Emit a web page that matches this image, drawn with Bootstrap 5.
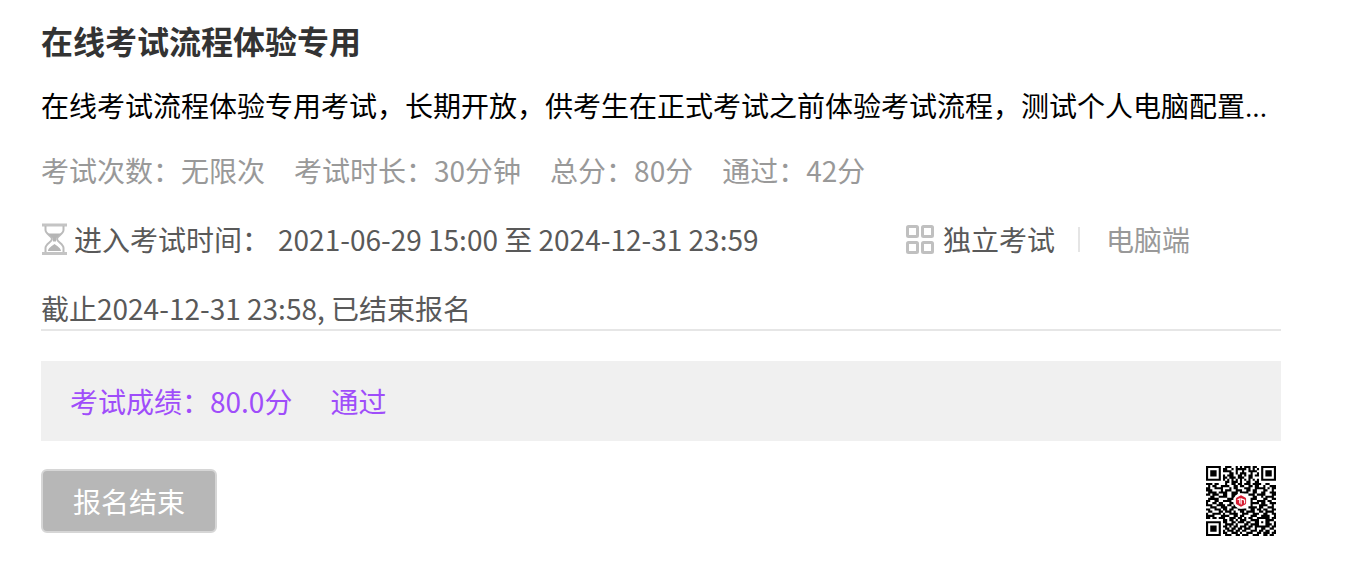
<!DOCTYPE html>
<html lang="zh-CN">
<head>
<meta charset="utf-8">
<meta name="viewport" content="width=device-width, initial-scale=1">
<title>在线考试流程体验专用</title>
<link href="https://cdn.jsdelivr.net/npm/bootstrap@5.3.0/dist/css/bootstrap.min.css" rel="stylesheet">
<style>
  body { font-family: "Noto Sans CJK SC", sans-serif; font-size: 28px; line-height: 40px; color: #595959; background: #fff; }
  .exam { padding: 20px 73px 48px 41px; }
  .exam-title { font-size: 32px; line-height: 40px; font-weight: 700; color: #333; margin-bottom: 25px; }
  .exam-desc { color: #000; margin-bottom: 25px; }
  .exam-dots { font-family: "Open Sans", sans-serif; line-height: 1; }
  .exam-facts { color: #999; column-gap: 29px; margin-bottom: 29px; }
  .exam-when { margin-bottom: 29px; }
  .exam-tags { width: 376px; }
  .exam-tags svg { margin-right: 8px; }
  .exam-time svg { margin-right: 6px; }
  .exam-range { margin-left: 8px; }
  .tag-rule { width: 2px; height: 25px; background: #e5e5e5; margin: 0 26px 0 23px; }
  .tag-device { color: #999; }
  .exam-deadline { border-bottom: 2px solid #e6e6e6; padding-bottom: 1px; margin-bottom: 30px; }
  .exam-score { background: #f0f0f0; color: #9f4dfa; padding: 20px 29px; column-gap: 38px; margin-bottom: 25px; }
  .btn-closed, .btn-closed:disabled { font-size: 28px; line-height: 40px; color: #fff; background: #b7b7b7; border: 2px solid #d6d6d6; border-radius: 6px; padding: 10px 30px; opacity: 1; margin-top: 3px; }
  .exam-qr { margin-right: 5px; }
</style>
</head>
<body>
<main class="exam">
  <h1 class="exam-title">在线考试流程体验专用</h1>
  <p class="exam-desc">在线考试流程体验专用考试，长期开放，供考生在正式考试之前体验考试流程，测试个人电脑配置<span class="exam-dots">...</span></p>
  <div class="exam-facts d-flex flex-wrap">
    <span>考试次数：无限次</span><span>考试时长：30分钟</span><span>总分：80分</span><span>通过：42分</span>
  </div>
  <div class="exam-when d-flex flex-wrap justify-content-between">
    <div class="exam-time d-flex align-items-center">
      <svg width="27" height="32" viewBox="0 0 27 32" fill="none" stroke="#bbb" aria-hidden="true">
        <path d="M1 2h25M1 30.500h25" stroke="#c4c4c4" stroke-width="3"/>
        <path d="M4.500 3v4c0 4 6.500 6 6.500 9s-6.500 5-6.500 9v4M22.500 3v4c0 4-6.500 6-6.500 9s6.500 5 6.500 9v4" stroke-width="2"/>
        <path d="M7 10.500h13l-5 5v3h-3v-3zM7 28c0-3 4-5 6.500-7 2.500 2 6.500 4 6.500 7z" fill="#b5b5b5" stroke="none"/>
      </svg>
      <span>进入考试时间：</span><span class="exam-range">2021-06-29 15:00 至 2024-12-31 23:59</span>
    </div>
    <div class="exam-tags d-flex align-items-center">
      <svg width="30" height="30" viewBox="0 0 30 30" fill="none" stroke="#c0c0c0" stroke-width="3" aria-hidden="true">
        <rect x="2.500" y="2.500" width="10" height="10" rx="1"/><rect x="17.500" y="2.500" width="10" height="10" rx="1"/>
        <rect x="2.500" y="18.500" width="10" height="10" rx="1"/><rect x="17.500" y="18.500" width="10" height="10" rx="1"/>
      </svg>
      <span>独立考试</span><span class="tag-rule"></span><span class="tag-device">电脑端</span>
    </div>
  </div>
  <div class="exam-deadline">截止2024-12-31 23:58, 已结束报名</div>
  <div class="exam-score d-flex flex-wrap"><span>考试成绩：80.0分</span><span>通过</span></div>
  <div class="d-flex justify-content-between align-items-start">
    <button type="button" class="btn btn-closed" disabled>报名结束</button>
    <svg class="exam-qr" width="70" height="70" viewBox="0 0 33 33" role="img" aria-label="二维码">
      <path id="qrModules" fill="#000"/>
      <circle cx="16.500" cy="16.500" r="3.600" fill="#fff"/>
      <path d="M16.500 14.300l1.900 1.100v2.200l-1.900 1.100-1.900-1.100v-2.200z" fill="#d71f35" stroke="#d71f35" stroke-linejoin="round"/>
      <path d="M14.900 15.900l1-.4v2.200M16.600 18.200v-2.700l1.600.6v1.600" fill="none" stroke="#fff" stroke-width=".5"/>
    </svg>
  </div>
</main>
<script src="https://cdn.jsdelivr.net/npm/bootstrap@5.3.0/dist/js/bootstrap.bundle.min.js"></script>
<script>
  // One string per row of QR modules
  const rows = [
    "111111100111001010111011001111111",
    "100000101100101111101010101000001",
    "101110101111001001001111001011101",
    "101110100001101011100100101011101",
    "101110101011100110101101101011101",
    "100000101101110111001100001000001",
    "111111101010101010101010101111111",
    "000000000110111010011001100000000",
    "111011000100110110111011110011000",
    "010110011110011011001101100100111",
    "110011110001011000111001111101011",
    "111000010111001110011011000110010",
    "011110111100111011110011001100111",
    "110111001100111000001110111100011",
    "001100111100110000000011001011110",
    "011111000011100000000111000110011",
    "110011001111000000000100111101100",
    "100110110001100000000111101100111",
    "111001111011010000000100011110010",
    "001110011100111000001111011001110",
    "110011101101100111100110110110011",
    "011000110111010011011110011011110",
    "100111101001111001110011100110011",
    "111100011110011011000111001111001",
    "110110111001110110101100111111011",
    "000000001101101011100111100011110",
    "111111101100110111011001101011001",
    "100000100111101000110111100011101",
    "101110101101011011101101111111011",
    "101110100110110110111001001100110",
    "101110101011101101100111011011001",
    "100000101100111010011100110111011",
    "111111100111001101110011100110110"
  ];
  document.getElementById("qrModules").setAttribute("d",
    rows.flatMap((row, y) => [...row].map((m, x) => m === "1" ? `M${x} ${y}h1v1h-1z` : "")).join(""));
</script>
</body>
</html>
